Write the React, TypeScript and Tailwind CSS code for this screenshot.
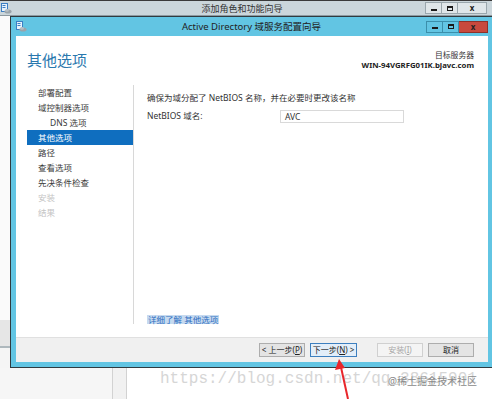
import React from "react";

const AppIcon = () => (
  <svg width="11" height="11" viewBox="0 0 11 11">
    <rect x="0.5" y="0.5" width="6" height="8" fill="#e8f2fb" stroke="#3b7fc4" strokeWidth="1" />
    <rect x="1.5" y="2" width="3" height="1" fill="#3b7fc4" />
    <rect x="1.5" y="4" width="3" height="1" fill="#3b7fc4" />
    <ellipse cx="7" cy="8.5" rx="3.6" ry="2" fill="#9aa4ab" />
    <ellipse cx="6" cy="7.4" rx="1.8" ry="1.4" fill="#b7c0c6" />
  </svg>
);

const WinButtons = ({ inner }: { inner: boolean }) => (
  <div className="flex h-[12px]">
    <div
      className={`w-[17px] h-full border flex items-center justify-center ${
        inner ? "bg-[#62c5e3] border-[#3b8fab]" : "bg-[#dfe6e9] border-[#9aa7ad]"
      }`}
    >
      <div className="w-[6px] h-[2px] bg-[#1b1b1b] mt-[3px]" />
    </div>
    <div
      className={`w-[16px] h-full border-y border-r flex items-center justify-center ${
        inner ? "bg-[#62c5e3] border-[#3b8fab]" : "bg-[#dfe6e9] border-[#9aa7ad]"
      }`}
    >
      <div className="w-[6px] h-[5px] border border-[#1b1b1b] border-t-2" />
    </div>
    <div
      className={`w-[29px] h-full border-y border-r flex items-center justify-center text-[8px] font-bold leading-none ${
        inner ? "bg-[#c8493d] border-[#8e3129] text-[#222]" : "bg-[#dfe6e9] border-[#9aa7ad] text-[#1b1b1b]"
      }`}
    >
      x
    </div>
  </div>
);

const navItems: { label: string; indent?: boolean; selected?: boolean; disabled?: boolean }[] = [
  { label: "部署配置" },
  { label: "域控制器选项" },
  { label: "DNS 选项", indent: true },
  { label: "其他选项", selected: true },
  { label: "路径" },
  { label: "查看选项" },
  { label: "先决条件检查" },
  { label: "安装", disabled: true },
  { label: "结果", disabled: true },
];

export default function App() {
  return (
    <div className="relative w-[492px] h-[399px] overflow-hidden bg-white font-['Noto_Sans','Noto_Sans_CJK_SC',sans-serif] text-[#2b2b2b]">
      {/* outer title bar */}
      <div className="h-[16px] border-t border-[#3a3a3a] border-b border-b-[#8e9aa0] bg-[#cbd6db] grid grid-cols-[1fr_auto_1fr] items-center">
        <div className="pl-[1px] flex items-center">
          <AppIcon />
        </div>
        <div className="text-[9px] leading-none text-[#333] mr-[8px]">添加角色和功能向导</div>
        <div className="flex justify-end pr-[5px]">
          <WinButtons inner={false} />
        </div>
      </div>

      {/* middle row */}
      <div className="flex h-[352px]">
        <div className="w-[10px] flex flex-col">
          <div className="h-[304px] bg-[#fafafa]" />
          <div className="h-[28px] bg-[#e6e6e6] border-b-2 border-[#aeb8bd]" />
          <div className="flex-1 bg-[#f5f5f5]" />
        </div>

        {/* inner window */}
        <div className="flex-1 flex flex-col border-l border-t border-b border-[#2f3b40] bg-[#62c5e3]">
          <div className="h-[19px] grid grid-cols-[1fr_auto_1fr] items-center">
            <div className="pl-[5px] flex items-center">
              <AppIcon />
            </div>
            <div className="text-[9.5px] leading-none text-[#222]">Active Directory 域服务配置向导</div>
            <div className="flex justify-end pr-[4px]">
              <WinButtons inner={true} />
            </div>
          </div>

          <div className="flex-1 pl-[5px] pr-[4px] pb-[5px] flex">
            <div className="flex-1 flex flex-col bg-white">
              {/* main white area */}
              <div className="h-[301px] flex flex-col">
                <div className="pt-[14px] pl-[11px] pr-[14px] flex justify-between items-start h-[34px]">
                  <div className="text-[15px] leading-[20px] text-[#2a78ae]">其他选项</div>
                  <div className="text-right text-[7.8px] leading-[9.5px] pt-[1px]">
                    <div className="text-[#333]">目标服务器</div>
                    <div className="font-bold text-[#222]">WIN-94VGRFG01IK.bjavc.com</div>
                  </div>
                </div>

                <div className="mt-[15px] h-[239px] flex pl-[11px]">
                  <div className="w-[106px] flex flex-col">
                    {navItems.map((it) => (
                      <div
                        key={it.label}
                        className={`h-[15px] leading-[15px] text-[8.5px] ${it.indent ? "pl-[23px]" : "pl-[11px]"} ${
                          it.selected
                            ? "bg-[#0f6ebf] text-white"
                            : it.disabled
                            ? "text-[#c4c4c4]"
                            : "text-[#3a3a3a]"
                        }`}
                      >
                        {it.label}
                      </div>
                    ))}
                  </div>
                  <div className="flex-1 border-l border-[#d8d8d8] flex flex-col pl-[13px] pt-[7px]">
                    <div className="text-[8.5px] leading-[12px] text-[#333]">
                      确保为域分配了 NetBIOS 名称，并在必要时更改该名称
                    </div>
                    <div className="mt-[6px] flex items-center h-[13px]">
                      <div className="w-[133px] text-[8.5px] leading-none text-[#333]">NetBIOS 域名:</div>
                      <div className="w-[124px] h-[13px] border border-[#d9d9d9] text-[8.5px] leading-[11px] pl-[4px] text-[#333]">
                        AVC
                      </div>
                    </div>
                    <div className="mt-auto self-start bg-[#c6daf0] text-[#2e6fc0] text-[8.5px] leading-[9px] px-[1px]">
                      详细了解 其他选项
                    </div>
                  </div>
                </div>
              </div>

              {/* footer */}
              <div className="h-[25px] border-t border-[#e0e0e0] bg-[#f0f0f0] flex items-center justify-end pr-[14px]">
                <div className="w-[46px] h-[14px] border border-[#adadad] bg-[#e4e4e4] text-[8px] leading-[12px] text-center text-[#222]">
                  &lt; 上一步(<span className="underline">P</span>)
                </div>
                <div className="ml-[5px] w-[47px] h-[14px] border border-[#3d7fbf] bg-[#e3eef9] text-[8px] leading-[12px] text-center text-[#222]">
                  下一步(<span className="underline">N</span>) &gt;
                </div>
                <div className="ml-[20px] w-[46px] h-[14px] border border-[#d0d0d0] bg-[#f4f4f4] text-[8px] leading-[12px] text-center text-[#a6a6a6]">
                  安装(<span className="underline">I</span>)
                </div>
                <div className="ml-[5px] w-[46px] h-[14px] border border-[#adadad] bg-[#e4e4e4] text-[8px] leading-[12px] text-center text-[#222]">
                  取消
                </div>
              </div>
            </div>
          </div>
        </div>
      </div>

      {/* bottom strip */}
      <div className="flex h-[31px]">
        <div className="w-[112px] bg-[#f6f6f6]" />
        <div className="w-[15px] border-l border-r border-[#d2d2d2] bg-[#f1f1f1]" />
        <div className="flex-1 bg-white" />
      </div>

      {/* watermark */}
      <div className="absolute left-[160px] top-[369px] font-['Liberation_Mono',monospace] text-[16px] leading-[20px] text-[#d6d6d6] whitespace-nowrap">
        https://blog.csdn.net/qq_38615901
      </div>
      <div className="absolute left-[388px] top-[375px] text-[10px] leading-[13px] text-[#8a8a8a] whitespace-nowrap">
        @稀土掘金技术社区
      </div>

      {/* red arrow */}
      <svg className="absolute left-[328px] top-[356px]" width="32" height="43" viewBox="0 0 32 43">
        <line x1="20" y1="43" x2="12.5" y2="9" stroke="#e8262b" strokeWidth="2" />
        <polygon points="11,3 7,14 17,12" fill="#e8262b" />
      </svg>
    </div>
  );
}
